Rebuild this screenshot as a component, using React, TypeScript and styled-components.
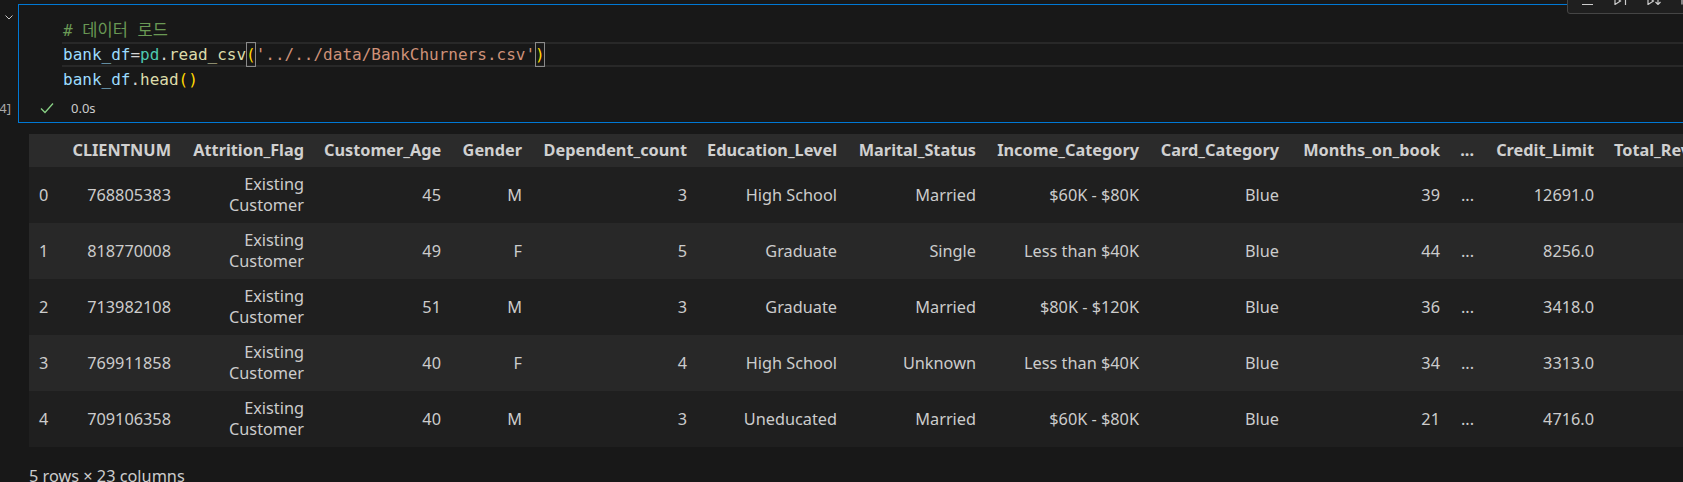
import styled, { createGlobalStyle, css } from "styled-components";

const GlobalStyle = createGlobalStyle`
  html, body {
    margin: 0;
    padding: 0;
    background: #181818;
    overflow: hidden;
  }
`;

const Page = styled.div`
  width: 1683px;
  height: 482px;
  overflow: hidden;
  padding-top: 4px;
  box-sizing: border-box;
  background: #181818;
  font-family: "Noto Sans", "Noto Sans CJK KR", sans-serif;
  color: #cccccc;
`;

const CellRow = styled.div`
  display: flex;
  width: 1760px;
`;

const Gutter = styled.div`
  width: 18px;
  flex: none;
  display: flex;
  flex-direction: column;
`;

const Chevron = styled.svg`
  margin: 11px 0 0 5px;
  display: block;
`;

const ExecCount = styled.div`
  margin-top: auto;
  margin-bottom: 5px;
  width: 11px;
  height: 20px;
  display: flex;
  justify-content: flex-end;
  align-items: center;
  overflow: hidden;
  font-size: 13px;
  color: #a8a8a8;
  white-space: nowrap;
`;

const CellBox = styled.div`
  position: relative;
  flex: 1;
  border: 1px solid #0078d4;
`;

const Toolbar = styled.div`
  position: absolute;
  top: -23px;
  left: 1548px;
  height: 32px;
  box-sizing: border-box;
  display: flex;
  align-items: flex-start;
  gap: 17px;
  padding: 6px 12px 0;
  background: #1f1f1f;
  border: 1px solid #454545;
  border-radius: 3px;
`;

const ToolIcon = styled.svg`
  display: block;
  flex: none;
`;

const Editor = styled.div`
  padding: 12px 0 0 43px;
  font-family: "DejaVu Sans Mono", "Liberation Mono", "Noto Sans CJK KR", monospace;
  font-size: 16px;
  line-height: 25px;
  white-space: pre;
`;

const CodeLine = styled.div<{ $current?: boolean }>`
  height: 25px;
  padding-left: 1px;
  ${(p) =>
    p.$current &&
    css`
      box-shadow: inset 0 2px #282828, inset 0 -2px #282828;
    `}
`;

const Tok = styled.span<{ $c: string }>`
  color: ${(p) => p.$c};
`;

const Hangul = styled.span`
  font-family: "Noto Sans CJK KR", sans-serif;
  font-size: 16.5px;
`;

const Bracket = styled.span<{ $match?: boolean }>`
  color: #ffd700;
  ${(p) =>
    p.$match &&
    css`
      display: inline-block;
      height: 25px;
      vertical-align: top;
      box-shadow: inset 0 0 0 1px #8a8a8a;
    `}
`;

const Status = styled.div`
  display: flex;
  align-items: center;
  height: 20px;
  padding: 6px 0 4px 21px;
  gap: 17px;
  font-size: 13px;
  color: #cccccc;
`;

const Output = styled.div`
  padding-left: 29px;
  margin-top: 11px;
`;

const Table = styled.table`
  border-collapse: collapse;
  table-layout: fixed;
  width: 1745px;
  font-size: 16.3px;
  line-height: 21px;
`;

const Col = styled.col<{ $w: number }>`
  width: ${(p) => p.$w}px;
`;

const HeadRow = styled.tr`
  background: #2b2b2b;
`;

const Th = styled.th`
  padding: 6px 10px;
  text-align: right;
  font-weight: 700;
  white-space: nowrap;
  overflow: hidden;
  color: #d0d0d0;
`;

const BodyRow = styled.tr`
  background: #1f1f1f;
  &:nth-child(even) {
    background: #282828;
  }
`;

const Td = styled.td<{ $index?: boolean }>`
  padding: 7px 10px;
  height: 42px;
  text-align: ${(p) => (p.$index ? "left" : "right")};
  vertical-align: middle;
  color: #cccccc;
`;

const Summary = styled.p`
  margin: 19px 0 0;
  font-size: 16.3px;
  line-height: 21px;
`;

const columns: { name: string; width: number }[] = [
  { name: "", width: 30 },
  { name: "CLIENTNUM", width: 122 },
  { name: "Attrition_Flag", width: 133 },
  { name: "Customer_Age", width: 137 },
  { name: "Gender", width: 81 },
  { name: "Dependent_count", width: 165 },
  { name: "Education_Level", width: 150 },
  { name: "Marital_Status", width: 139 },
  { name: "Income_Category", width: 163 },
  { name: "Card_Category", width: 140 },
  { name: "Months_on_book", width: 161 },
  { name: "...", width: 34 },
  { name: "Credit_Limit", width: 120 },
  { name: "Total_Revolving_Bal", width: 170 },
];

const rows: string[][] = [
  ["0", "768805383", "Existing Customer", "45", "M", "3", "High School", "Married", "$60K - $80K", "Blue", "39", "...", "12691.0", "777"],
  ["1", "818770008", "Existing Customer", "49", "F", "5", "Graduate", "Single", "Less than $40K", "Blue", "44", "...", "8256.0", "864"],
  ["2", "713982108", "Existing Customer", "51", "M", "3", "Graduate", "Married", "$80K - $120K", "Blue", "36", "...", "3418.0", "0"],
  ["3", "769911858", "Existing Customer", "40", "F", "4", "High School", "Unknown", "Less than $40K", "Blue", "34", "...", "3313.0", "2517"],
  ["4", "709106358", "Existing Customer", "40", "M", "3", "Uneducated", "Married", "$60K - $80K", "Blue", "21", "...", "4716.0", "0"],
];

const C = {
  comment: "#6a9955",
  variable: "#9cdcfe",
  plain: "#d4d4d4",
  module: "#4ec9b0",
  func: "#dcdcaa",
  string: "#ce9178",
};

function CellToolbar() {
  const stroke = { stroke: "#cccccc", strokeWidth: 1.2, fill: "none" };
  return (
    <Toolbar>
      <ToolIcon width="16" height="16" viewBox="0 0 16 16">
        <path d="M2 5.5h11M2 10.5h11M2 15.5h11" {...stroke} />
      </ToolIcon>
      <ToolIcon width="16" height="16" viewBox="0 0 16 16">
        <path d="M2 8v7.5l5.5-3.5z" {...stroke} />
        <path d="M12.5 3v13" {...stroke} />
      </ToolIcon>
      <ToolIcon width="16" height="16" viewBox="0 0 16 16">
        <path d="M2 8v7.5l5.5-3.5z" {...stroke} />
        <path d="M12 4v11.5M9.5 13l2.5 2.5 2.5-2.5" {...stroke} />
      </ToolIcon>
      <ToolIcon width="16" height="16" viewBox="0 0 16 16">
        <path d="M3 4v11.5" {...stroke} />
      </ToolIcon>
    </Toolbar>
  );
}

export default function App() {
  return (
    <Page>
      <GlobalStyle />
      <CellRow>
        <Gutter>
          <Chevron width="8" height="5" viewBox="0 0 8 5">
            <path d="M0.5 0.5L4 4L7.5 0.5" stroke="#c5c5c5" strokeWidth="1" fill="none" />
          </Chevron>
          <ExecCount>[4]</ExecCount>
        </Gutter>
        <CellBox>
          <CellToolbar />
          <Editor>
            <CodeLine>
              <Tok $c={C.comment}>
                # <Hangul>데이터</Hangul> <Hangul>로드</Hangul>
              </Tok>
            </CodeLine>
            <CodeLine $current>
              <Tok $c={C.variable}>bank_df</Tok>
              <Tok $c={C.plain}>=</Tok>
              <Tok $c={C.module}>pd</Tok>
              <Tok $c={C.plain}>.</Tok>
              <Tok $c={C.func}>read_csv</Tok>
              <Bracket $match>(</Bracket>
              <Tok $c={C.string}>'../../data/BankChurners.csv'</Tok>
              <Bracket $match>)</Bracket>
            </CodeLine>
            <CodeLine>
              <Tok $c={C.variable}>bank_df</Tok>
              <Tok $c={C.plain}>.</Tok>
              <Tok $c={C.func}>head</Tok>
              <Bracket>()</Bracket>
            </CodeLine>
          </Editor>
          <Status>
            <svg width="14" height="14" viewBox="0 0 14 14">
              <path d="M1 7.5L5 11.5L13 2.5" stroke="#89d185" strokeWidth="1.3" fill="none" />
            </svg>
            <span>0.0s</span>
          </Status>
        </CellBox>
      </CellRow>
      <Output>
        <Table>
          <colgroup>
            {columns.map((c, i) => (
              <Col key={i} $w={c.width} />
            ))}
          </colgroup>
          <thead>
            <HeadRow>
              {columns.map((c, i) => (
                <Th key={i}>{c.name}</Th>
              ))}
            </HeadRow>
          </thead>
          <tbody>
            {rows.map((r) => (
              <BodyRow key={r[0]}>
                {r.map((v, i) => (
                  <Td key={i} $index={i === 0}>
                    {v}
                  </Td>
                ))}
              </BodyRow>
            ))}
          </tbody>
        </Table>
        <Summary>5 rows × 23 columns</Summary>
      </Output>
    </Page>
  );
}
